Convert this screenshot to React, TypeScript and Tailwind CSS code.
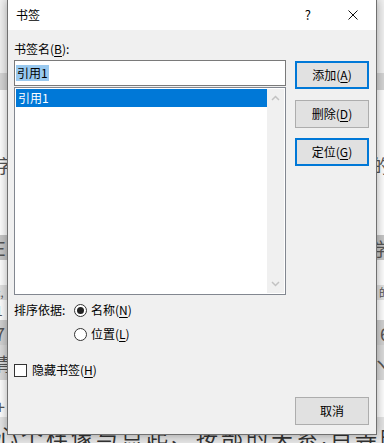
import React from "react";

const F = "font-['Noto_Sans_CJK_SC','Noto_Sans',sans-serif]";

function Btn({ children, primary }: { children: React.ReactNode; primary?: boolean }) {
  return (
    <div
      className={`h-[28px] w-[74px] flex items-center justify-center bg-[#e1e1e1] text-[12px] text-black ${
        primary ? "border-2 border-[#0078d7]" : "border border-[#adadad]"
      }`}
    >
      {children}
    </div>
  );
}

function U({ c }: { c: string }) {
  return <span className="underline underline-offset-2">{c}</span>;
}

function Band({ h, bg, left, right, ts = "text-[18px]" }: { h: string; bg: string; left?: string; right?: string; ts?: string }) {
  return (
    <div className={`${h} ${bg} w-full flex items-center justify-between overflow-hidden text-[#555] ${ts} leading-none`}>
      <span className="ml-[-5px] leading-none">{left}</span>
      <span className="mr-[-6px] leading-none">{right}</span>
    </div>
  );
}

export default function App() {
  return (
    <div className={`relative w-[384px] h-[443px] overflow-hidden bg-white ${F}`}>
      {/* background document */}
      <div className="flex flex-col w-full">
        <Band h="h-[73px]" bg="bg-[#f2f2f2]" />
        <Band h="h-[17px]" bg="bg-[#d6d6d6]" />
        <Band h="h-[62px]" bg="bg-white" />
        <Band h="h-[26px]" bg="bg-white" left="字" right="的" />
        <Band h="h-[57px]" bg="bg-white" />
        <Band h="h-[25px]" bg="bg-[#c8c8c8]" left="E" right="学" />
        <Band h="h-[25px]" bg="bg-white" />
        <Band h="h-[15px]" bg="bg-[#e2e2e2]" left="c," right="的" ts="text-[11px]" />
        <Band h="h-[20px]" bg="bg-white" left="1" ts="text-[14px]" />
        <Band h="h-[25px]" bg="bg-[#d2d2d2]" left="7" right="6" />
        <Band h="h-[35px]" bg="bg-[#dcdcdc]" left="青" right="ヽ" />
        <Band h="h-[15px]" bg="bg-white" />
        <Band h="h-[22px]" bg="bg-white" left="+" />
        <div className="h-[26px] w-full bg-[#e6e6e6] overflow-hidden flex items-end">
          <div className="text-[22px] leading-none text-[#333] whitespace-nowrap mb-[-3px] ml-[-4px] tracking-[3px]">
            心个样像与点起、按部的关系.自等的个开开用.
          </div>
        </div>
      </div>

      {/* dialog */}
      <div className="absolute left-[7px] top-[-1px] w-[370px] h-[436px] border border-[#707070] bg-[#f0f0f0] flex flex-col shadow-[0_0_10px_rgba(0,0,0,0.35)] text-black text-[12px]">
        {/* title bar */}
        <div className="h-[30px] bg-white flex items-center">
          <span className="ml-[8px] text-[12px]">书签</span>
          <span className="ml-auto text-[13px] mr-[37px]">?</span>
          <svg width="10" height="10" viewBox="0 0 10 10" className="mr-[18px]">
            <path d="M0.5 0.5 L9.5 9.5 M9.5 0.5 L0.5 9.5" stroke="#111" strokeWidth="1" />
          </svg>
        </div>
        {/* content */}
        <div className="flex-1 flex pl-[6px] pr-[7px] pb-[9px]">
          <div className="w-[272px] flex flex-col pt-[11px]">
            <div className="h-[16px] flex items-center leading-none">
              书签名(<U c="B" />):
            </div>
            <div className="mt-[3px] h-[26px] border border-[#7a7a7a] bg-white flex items-center pl-[1px]">
              <span className="bg-[#99c9ef] px-[1px] leading-[16px]">引用1</span>
            </div>
            <div className="mt-[1px] h-[208px] border border-[#828790] bg-white flex p-[1px]">
              <div className="flex-1">
                <div className="h-[18px] bg-[#0078d7] text-white flex items-center pl-[2px]">引用1</div>
              </div>
              <div className="w-[17px] bg-[#f0f0f0] flex flex-col items-center justify-between py-[6px]">
                <svg width="9" height="6" viewBox="0 0 9 6">
                  <path d="M1 5 L4.5 1.5 L8 5" stroke="#c2c2c2" strokeWidth="1.5" fill="none" />
                </svg>
                <svg width="9" height="6" viewBox="0 0 9 6">
                  <path d="M1 1 L4.5 4.5 L8 1" stroke="#c2c2c2" strokeWidth="1.5" fill="none" />
                </svg>
              </div>
            </div>
            <div className="mt-[7px] flex">
              <div className="h-[16px] flex items-center leading-none w-[60px]">排序依据:</div>
              <div className="flex flex-col gap-[8px]">
                <div className="h-[16px] flex items-center">
                  <div className="w-[13px] h-[13px] rounded-full border border-[#333] bg-white flex items-center justify-center">
                    <div className="w-[7px] h-[7px] rounded-full bg-[#222]" />
                  </div>
                  <span className="ml-[4px] leading-none">名称(<U c="N" />)</span>
                </div>
                <div className="h-[16px] flex items-center">
                  <div className="w-[13px] h-[13px] rounded-full border border-[#333] bg-white" />
                  <span className="ml-[4px] leading-none">位置(<U c="L" />)</span>
                </div>
              </div>
            </div>
            <div className="mt-[20px] h-[16px] flex items-center">
              <div className="w-[13px] h-[13px] border border-[#333] bg-white" />
              <span className="ml-[5px] leading-none">隐藏书签(<U c="H" />)</span>
            </div>
          </div>
          <div className="ml-[9px] flex flex-col pt-[31px]">
            <Btn primary>
              添加(<U c="A" />)
            </Btn>
            <div className="mt-[11px]">
              <Btn>
                删除(<U c="D" />)
              </Btn>
            </div>
            <div className="mt-[10px]">
              <Btn primary>
                定位(<U c="G" />)
              </Btn>
            </div>
            <div className="mt-auto">
              <Btn>取消</Btn>
            </div>
          </div>
        </div>
      </div>
    </div>
  );
}
